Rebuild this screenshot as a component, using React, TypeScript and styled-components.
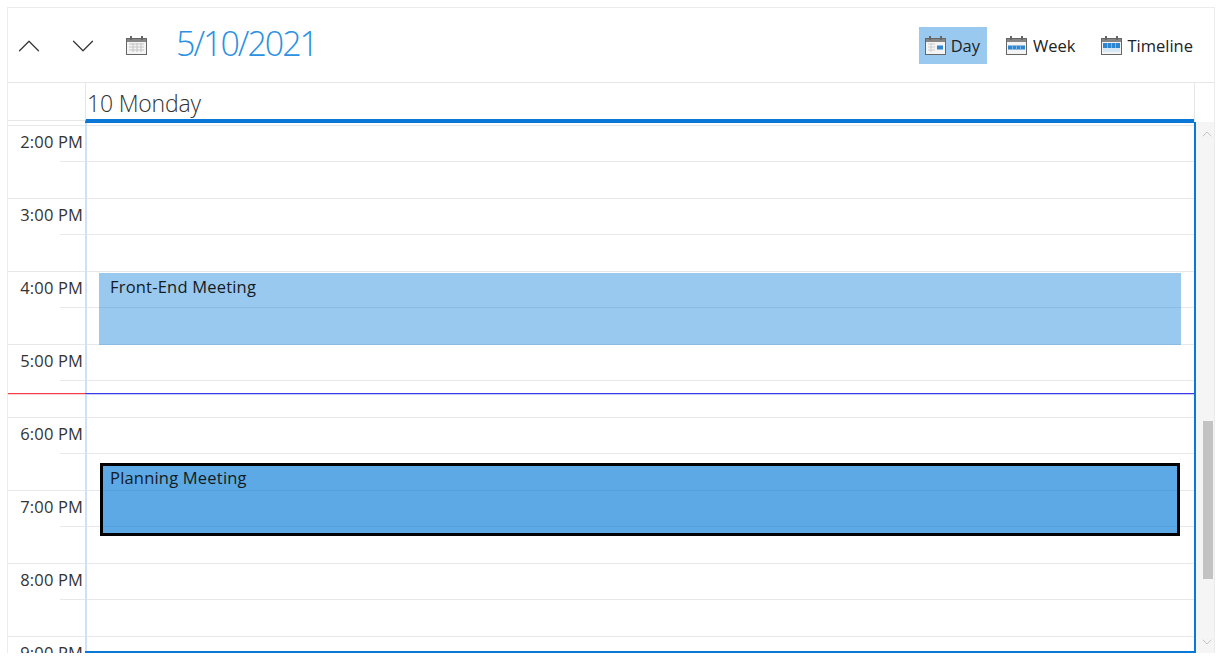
import React from 'react';
import styled, { createGlobalStyle } from 'styled-components';
import { ChevronDown, ChevronUp } from 'lucide-react';

const HOURS = ['2:00 PM', '3:00 PM', '4:00 PM', '5:00 PM', '6:00 PM', '7:00 PM', '8:00 PM', '9:00 PM'];

const GlobalStyle = createGlobalStyle`
  html, body {
    margin: 0;
    background: #fff;
  }
  * {
    box-sizing: border-box;
  }
`;

const Shell = styled.main`
  width: 1224px;
  height: 663px;
  padding: 7px 9px 10px 7px;
  font-family: 'Open Sans', 'Noto Sans', sans-serif;
  color: #222;
`;

const Panel = styled.div`
  display: flex;
  flex-direction: column;
  height: 646px;
  border: solid #ececec;
  border-width: 1px 1px 0 1px;
`;

const Toolbar = styled.header`
  display: flex;
  align-items: center;
  justify-content: space-between;
  height: 75px;
  flex: none;
  padding: 1px 14px 0 0;
  border-bottom: 1px solid #e6e6e6;
`;

const ToolGroup = styled.div`
  display: flex;
  align-items: center;
`;

const NavButton = styled.button`
  display: flex;
  align-items: center;
  justify-content: center;
  width: 41px;
  height: 37px;
  margin-right: 13px;
  padding: 0;
  border: 0;
  background: none;
  color: #333;
`;

const DateTitle = styled.h1`
  margin: 0 0 5px 6px;
  font-size: 34px;
  font-weight: 300;
  line-height: 44px;
  letter-spacing: -2px;
  color: #2b91e3;
`;

const ViewGroup = styled.div`
  display: flex;
  gap: 13px;
`;

const ViewButton = styled.button<{ $active?: boolean; $iconGap: number }>`
  display: flex;
  align-items: center;
  gap: ${({ $iconGap }) => $iconGap}px;
  height: 37px;
  padding: 0 7px 0 6px;
  border: 0;
  background: ${({ $active }) => ($active ? '#99c9ef' : 'transparent')};
  font: inherit;
  font-size: 16.5px;
  color: #222;
`;

const DayHeader = styled.div`
  display: flex;
  height: 39px;
  flex: none;
`;

const HeaderGutter = styled.div`
  width: 77px;
  flex: none;
  border-bottom: 1px solid #e6e6e6;
  margin-bottom: 1px;
`;

const DayLabel = styled.div`
  flex: 1;
  padding-left: 1px;
  font-size: 23px;
  font-weight: 300;
  line-height: 40px;
  letter-spacing: -0.2px;
  color: #333;
  border-left: 1px solid #e6e6e6;
  border-bottom: 3px solid #0a78d7;
`;

const HeaderSpare = styled.div`
  width: 20px;
  flex: none;
  border-left: 1px solid #e6e6e6;
`;

const Body = styled.div`
  display: flex;
  flex: 1;
  min-height: 0;
`;

const Schedule = styled.div`
  position: relative;
  flex: 1;
  padding-top: 3px;
  overflow: hidden;
`;

const HourRow = styled.div`
  height: 73px;
  border-top: 1px solid #e8e8e8;
`;

const HourLabel = styled.div`
  width: 76px;
  height: 34.5px;
  padding-right: 1px;
  font-size: 16.5px;
  line-height: 32px;
  letter-spacing: 0.15px;
  text-align: right;
  color: #333;
`;

const HalfLine = styled.div`
  height: 37.5px;
  margin-left: 52px;
  border-top: 1px solid #e8e8e8;
`;

const DayFrame = styled.div`
  position: absolute;
  top: 0;
  left: 77px;
  right: 0;
  bottom: 0;
  border: solid #0a78d7;
  border-width: 1px 2px 2px 0;
  &::before {
    content: '';
    position: absolute;
    top: 0;
    bottom: 0;
    left: 0;
    width: 2px;
    background: #cfe2f5;
  }
`;

const Appointment = styled.div<{ $selected?: boolean }>`
  position: absolute;
  left: ${({ $selected }) => ($selected ? '15px' : '14px')};
  right: ${({ $selected }) => ($selected ? '14px' : '13px')};
  padding: ${({ $selected }) => ($selected ? '0 0 0 7px' : '2px 0 0 11px')};
  font-size: 16.5px;
  line-height: 24px;
  letter-spacing: 0.2px;
  color: #141b22;
  background: ${({ $selected }) => ($selected ? 'rgba(0, 120, 215, 0.64)' : 'rgba(0, 120, 215, 0.4)')};
  border: ${({ $selected }) => ($selected ? '3px solid #000' : '0')};
`;

const TimeMarker = styled.div`
  position: absolute;
  top: 270px;
  left: 0;
  right: 0;
  height: 2px;
  background: linear-gradient(#3a3ae6 50%, #c9c9f7 50%);
`;

const TimeMarkerGutter = styled.div`
  position: absolute;
  top: 271px;
  left: 0;
  width: 77px;
  height: 2px;
  background: linear-gradient(#f5404a 50%, #fbd0d3 50%);
`;

const ScrollTrack = styled.div`
  position: relative;
  display: flex;
  flex-direction: column;
  align-items: center;
  justify-content: space-between;
  width: 18px;
  flex: none;
  padding: 4px 0 3px 3px;
  background: #f5f5f5;
  color: #c4c4c4;
`;

const ScrollThumb = styled.div`
  position: absolute;
  top: 299px;
  right: 1px;
  width: 10px;
  height: 158px;
  background: #c3c3c3;
`;

type CalendarKind = 'month' | 'day' | 'week' | 'timeline';

const CalendarIcon = ({ kind }: { kind: CalendarKind }) => (
  <svg width="21" height="19" viewBox="0 0 21 19" style={{ flex: 'none' }}>
    <rect x="0.5" y="2.5" width="20" height="16" fill="#f4f4f4" stroke="#666" />
    <rect x="1" y="3" width="19" height="3" fill="#858585" />
    <rect x="4" y="0" width="2" height="4" fill="#666" />
    <rect x="15" y="0" width="2" height="4" fill="#666" />
    {kind === 'month' && (
      <path d="M3 8h15M3 11h15M3 14h15M7 7v9M11 7v9M15 7v9" stroke="#c4c4c4" strokeWidth="1" fill="none" />
    )}
    {kind === 'day' && (
      <>
        <path d="M3 8h7M3 11h7M3 14h7M6 7v9" stroke="#cecece" strokeWidth="1" fill="none" />
        <rect x="12" y="9.5" width="6" height="4" fill="#2f86d0" />
      </>
    )}
    {kind === 'week' && (
      <>
        <rect x="2" y="9.5" width="17" height="4" fill="#2f86d0" />
        <path d="M6.5 9.5v4M10.5 9.5v4M14.5 9.5v4" stroke="#7fb4e2" strokeWidth="1" />
      </>
    )}
    {kind === 'timeline' && (
      <>
        <rect x="2" y="7" width="17" height="5" fill="#2f86d0" />
        <path d="M6.5 7v5M10.5 7v5M14.5 7v5" stroke="#7fb4e2" strokeWidth="1" />
        <rect x="2" y="12" width="17" height="4" fill="#d5e6f5" />
      </>
    )}
  </svg>
);

const App: React.FC = () => (
  <Shell>
    <GlobalStyle />
    <Panel>
      <Toolbar>
        <ToolGroup>
          <NavButton type="button" aria-label="Previous">
            <ChevronUp size={38} strokeWidth={1.2} absoluteStrokeWidth />
          </NavButton>
          <NavButton type="button" aria-label="Next">
            <ChevronDown size={38} strokeWidth={1.2} absoluteStrokeWidth />
          </NavButton>
          <NavButton type="button" aria-label="Pick date">
            <CalendarIcon kind="month" />
          </NavButton>
          <DateTitle>5/10/2021</DateTitle>
        </ToolGroup>
        <ViewGroup>
          <ViewButton type="button" $active $iconGap={5}>
            <CalendarIcon kind="day" />
            Day
          </ViewButton>
          <ViewButton type="button" $iconGap={6}>
            <CalendarIcon kind="week" />
            Week
          </ViewButton>
          <ViewButton type="button" $iconGap={5}>
            <CalendarIcon kind="timeline" />
            Timeline
          </ViewButton>
        </ViewGroup>
      </Toolbar>
      <DayHeader>
        <HeaderGutter />
        <DayLabel>10 Monday</DayLabel>
        <HeaderSpare />
      </DayHeader>
      <Body>
        <Schedule>
          {HOURS.map((hour) => (
            <HourRow key={hour}>
              <HourLabel>{hour}</HourLabel>
              <HalfLine />
            </HourRow>
          ))}
          <TimeMarkerGutter />
          <DayFrame>
            <Appointment style={{ top: 150, height: 72 }}>Front-End Meeting</Appointment>
            <Appointment $selected style={{ top: 340, height: 73 }}>
              Planning Meeting
            </Appointment>
            <TimeMarker />
          </DayFrame>
        </Schedule>
        <ScrollTrack>
          <ChevronUp size={16} strokeWidth={1} absoluteStrokeWidth />
          <ScrollThumb />
          <ChevronDown size={16} strokeWidth={1} absoluteStrokeWidth />
        </ScrollTrack>
      </Body>
    </Panel>
  </Shell>
);

export default App;
